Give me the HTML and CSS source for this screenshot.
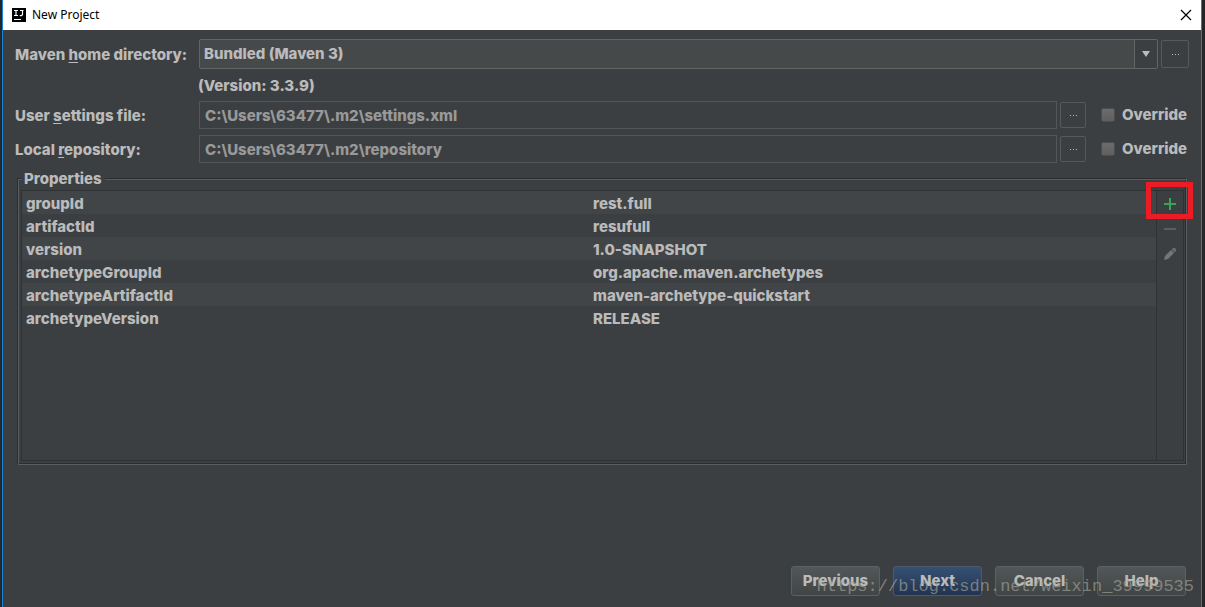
FILE: index.html
```
<!DOCTYPE html>
<html lang="en">
<head>
  <meta charset="UTF-8" />
  <title>New Project</title>
  <link rel="stylesheet" href="styles.css">
</head>
<body>
  <div class="window">
    <header class="titlebar">
      <svg class="logo" width="14" height="14" viewBox="0 0 14 14">
        <rect width="14" height="14" fill="#000"/>
        <path d="M2 2.500h4M4 2.500v5M2 7.500h4M8 2.500h3.500M10.500 2.500v4q0 1.200-2.800 1" fill="none" stroke="#fff" stroke-width="1.2"/>
        <path d="M2 11.500h7" stroke="#fff" stroke-width="1"/>
      </svg>
      <h1>New Project</h1>
      <button class="close" type="button" aria-label="Close">
        <svg width="12" height="12" viewBox="0 0 12 12"><path d="M1 1l10 10M11 1L1 11" stroke="#000" stroke-width="1.2"/></svg>
      </button>
    </header>

    <main class="content">
      <!-- Maven settings -->
      <div class="row row-home">
        <label class="name" for="mavenHome">Maven <u>h</u>ome directory:</label>
        <div class="combo">
          <select id="mavenHome">
            <option>Bundled (Maven 3)</option>
          </select>
          <span class="arrow"><svg width="8" height="6" viewBox="0 0 8 6"><path d="M0 0h8L4 6z" fill="#bbb"/></svg></span>
        </div>
        <button class="browse browse-large" type="button" aria-label="Browse Maven home">
          <svg width="8" height="2" viewBox="0 0 8 2"><path d="M1 1h1v1H1zM4 1h1v1H4zM7 1h1v1H7z" fill="#bbb"/></svg>
        </button>
      </div>
      <p class="version">(Version: 3.3.9)</p>
      <div class="row">
        <label class="name" for="settingsFile">User <u>s</u>ettings file:</label>
        <input class="path" type="text" id="settingsFile" value="C:\Users\63477\.m2\settings.xml" readonly />
        <button class="browse" type="button" aria-label="Browse settings file">
          <svg width="8" height="2" viewBox="0 0 8 2"><path d="M1 1h1v1H1zM4 1h1v1H4zM7 1h1v1H7z" fill="#bbb"/></svg>
        </button>
        <label class="override"><input type="checkbox" /> <span>Override</span></label>
      </div>
      <div class="row">
        <label class="name" for="localRepo">Local <u>r</u>epository:</label>
        <input class="path" type="text" id="localRepo" value="C:\Users\63477\.m2\repository" readonly />
        <button class="browse" type="button" aria-label="Browse local repository">
          <svg width="8" height="2" viewBox="0 0 8 2"><path d="M1 1h1v1H1zM4 1h1v1H4zM7 1h1v1H7z" fill="#bbb"/></svg>
        </button>
        <label class="override"><input type="checkbox" /> <span>Override</span></label>
      </div>

      <!-- Properties -->
      <fieldset class="properties">
        <legend>Properties</legend>
        <div class="panel">
          <div class="list">
            <table>
              <tbody>
                <tr><td>groupId</td><td>rest.full</td></tr>
                <tr><td>artifactId</td><td>resufull</td></tr>
                <tr><td>version</td><td>1.0-SNAPSHOT</td></tr>
                <tr><td>archetypeGroupId</td><td>org.apache.maven.archetypes</td></tr>
                <tr><td>archetypeArtifactId</td><td>maven-archetype-quickstart</td></tr>
                <tr><td>archetypeVersion</td><td>RELEASE</td></tr>
              </tbody>
            </table>
          </div>
          <div class="tools">
            <button class="tool add" type="button" aria-label="Add">
              <svg width="12" height="12" viewBox="0 0 12 12"><path d="M5 0h2v5h5v2H7v5H5V7H0V5h5z" fill="#36a453"/></svg>
            </button>
            <button class="tool" type="button" aria-label="Remove">
              <svg width="12" height="12" viewBox="0 0 12 12"><path d="M0 5h12v2H0z" fill="#5b5d5e"/></svg>
            </button>
            <button class="tool" type="button" aria-label="Edit">
              <svg width="12" height="12" viewBox="0 0 12 12"><path d="M0 12l1-4 6-6 3 3-6 6z" fill="#747677"/><path d="M7.500 1.500L9 0h2l1 1v2l-1.500 1.500z" fill="#686a6b"/></svg>
            </button>
          </div>
        </div>
      </fieldset>
    </main>

    <footer class="actions">
      <button type="button">Previous</button>
      <button type="button" class="primary">Next</button>
      <button type="button">Cancel</button>
      <button type="button">Help</button>
    </footer>
  </div>
  <div class="watermark">https://blog.csdn.net/weixin_39999535</div>
</body>
</html>
```
FILE: styles.css
```
*,
*::after {
  box-sizing: border-box;
}

body {
  margin: 0;
  padding: 0 3px 0 2px;
  background: #242628;
  color: #bbb;
  font: 800 15px/20px Inter, "Liberation Sans", sans-serif;
}

button, input, select {
  margin: 0;
  font: inherit;
  color: inherit;
}

button {
  display: flex;
  align-items: center;
  justify-content: center;
  padding: 0;
}

.window {
  display: flex;
  flex-direction: column;
  min-height: 100vh;
  border: solid #1883d7;
  border-width: 0 1px;
  background: #3c3f41;
}

/* Title bar */
.titlebar {
  display: flex;
  align-items: center;
  height: 30px;
  padding: 0 9px;
  background: #fff;
  color: #000;
}

.titlebar h1 {
  flex: 1;
  margin: 0 0 0 6px;
  font: 12px/20px "Noto Sans", "Open Sans", sans-serif;
}

.close {
  border: 0;
  background: none;
}

/* Settings rows */
.content {
  flex: 1;
  padding: 9px 12px 0;
}

.row {
  display: flex;
  align-items: center;
  gap: 3px;
  margin-bottom: 6px;
}

.row-home {
  margin-bottom: 0;
}

.name {
  width: 181px;
  padding-top: 1px;
  white-space: nowrap;
}

.name u {
  text-decoration-thickness: 1px;
  text-underline-offset: 2px;
}

.combo {
  display: flex;
  flex: 1;
  height: 30px;
  border: 1px solid #646464;
  border-radius: 2px;
  background: #45494a;
}

.combo select {
  flex: 1;
  padding: 0 4px;
  border: 0;
  background: none;
  appearance: none;
}

.arrow {
  display: flex;
  align-items: center;
  justify-content: center;
  width: 23px;
  padding-right: 1px;
  border-left: 1px solid #646464;
  background: #3c3f41;
}

.version {
  margin: 0;
  padding: 7px 0 5px 183px;
}

.path {
  flex: 1;
  height: 28px;
  padding: 0 5px;
  border: 1px solid #555;
  background: #3c3f41;
  color: #999;
}

.browse {
  width: 26px;
  height: 26px;
  border: 1px solid #57595a;
  border-radius: 2px;
  background: #3c3f41;
}

.browse-large {
  width: 28px;
  height: 28px;
}

.override {
  display: flex;
  align-items: center;
  width: 88px;
  margin-left: 12px;
  white-space: nowrap;
}

.override input {
  width: 14px;
  height: 14px;
  margin-right: 7px;
  border: 1px solid #4c4e4f;
  border-radius: 2px;
  background: linear-gradient(#6c6c6c, #5f5f5f);
  appearance: none;
}

/* Properties: etched border, a light line with a dark one beside it */
.properties {
  min-width: 0;
  margin: 0 2px 0 3px;
  padding: 1px 2px 3px;
  border: 1px solid #5a5d5f;
  box-shadow: -1px -1px #2b2d2f, inset -1px -1px #2b2d2f;
}

.properties legend {
  margin-left: 1px;
  padding: 0 3px 0 2px;
  background: #3c3f41;
}

.panel {
  display: flex;
  min-height: 271px;
  border: 1px solid #2f3234;
}

.list {
  flex: 1;
}

table {
  width: 100%;
  border-collapse: collapse;
  table-layout: fixed;
}

tr:nth-child(odd) {
  background: #414547;
}

td {
  height: 23px;
  padding: 2px 4px 0;
}

.tools {
  display: flex;
  flex-direction: column;
  width: 27px;
  border-left: 1px solid #2f3234;
}

.tool {
  position: relative;
  height: 25px;
  border: 0;
  background: none;
}

/* Red marker around the add button */
.add::after {
  content: "";
  position: absolute;
  top: -9px;
  left: -11px;
  width: 47px;
  height: 37px;
  border: 5px solid #ed1c24;
}

/* Bottom buttons */
.actions {
  display: flex;
  justify-content: flex-end;
  gap: 13px;
  padding: 0 15px 11px;
}

.actions button {
  width: 89px;
  height: 30px;
  border: 1px solid #5e6162;
  border-radius: 3px;
  background: linear-gradient(#525758, #414546);
}

.actions .primary {
  border-color: #4c5a6e;
  background: linear-gradient(#365073, #22344f);
}

.watermark {
  position: absolute;
  right: 11px;
  bottom: 9px;
  color: rgba(165, 165, 155, 0.65);
  font: 17px/22px "Liberation Mono", monospace;
  pointer-events: none;
}
```
